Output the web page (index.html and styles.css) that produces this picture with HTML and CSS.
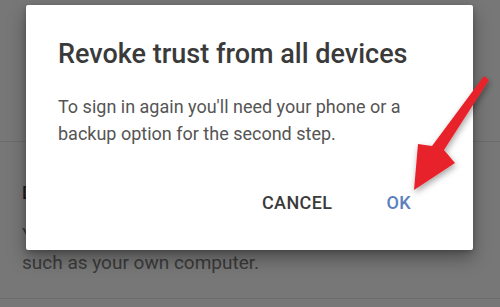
FILE: index.html
```html
<!DOCTYPE html>
<html>
<head>
<meta charset="utf-8">
<link rel="stylesheet" href="styles.css">
</head>
<body>
<div class="page">
  <div class="rule rule-top"></div>
  <div class="section">
    <h2 class="sec-title">Devices you trust</h2>
    <p class="sec-text">You'll skip the second step on trusted devices,<br>such as your own computer.</p>
  </div>
  <div class="rule"></div>
</div>

<div class="dialog">
  <h1 class="dlg-title">Revoke trust from all devices</h1>
  <p class="dlg-body">To sign in again you'll need your phone or a backup option for the second step.</p>
  <div class="dlg-actions">
    <button class="btn btn-cancel">CANCEL</button>
    <button class="btn btn-ok">OK</button>
  </div>
</div>

<svg class="arrow" width="500" height="307" viewBox="0 0 500 307">
  <defs>
    <filter id="sh" x="-50%" y="-50%" width="200%" height="200%">
      <feDropShadow dx="1" dy="3" stdDeviation="3" flood-color="#000" flood-opacity="0.35"/>
    </filter>
  </defs>
  <polygon filter="url(#sh)" fill="#e8232c" points="484,76 489,80 444,150 455,163 414,190 418,144 432,146"/>
</svg>
</body>
</html>
```
FILE: styles.css
```css
html, body {
  margin: 0;
  padding: 0;
}
body {
  width: 500px;
  height: 307px;
  overflow: hidden;
  background: #777777;
  font-family: Roboto, "Noto Sans", sans-serif;
  position: relative;
}
.page {
  padding-top: 141px;
}
.rule {
  height: 1px;
  background: #6c6c6c;
}
.section {
  padding: 40px 22px 21px 22px;
}
.sec-title {
  margin: 0;
  font-size: 18px;
  font-weight: 500;
  color: #1e1e1e;
  line-height: 22px;
}
.sec-text {
  margin: 17px 0 0 0;
  font-size: 19px;
  line-height: 28px;
  color: #3a3a3a;
  white-space: nowrap;
}
.dialog {
  position: absolute;
  left: 26px;
  top: 5px;
  width: 447px;
  height: 245px;
  box-sizing: border-box;
  background: #ffffff;
  border-radius: 2px;
  box-shadow: 0 8px 18px rgba(0,0,0,0.35), 0 2px 5px rgba(0,0,0,0.2);
  padding: 33px 32px 0 32px;
  display: flex;
  flex-direction: column;
}
.dlg-title {
  margin: 0;
  font-size: 27px;
  font-weight: 500;
  line-height: 32px;
  color: #3a3a3a;
}
.dlg-body {
  margin: 23px 0 0 0;
  font-size: 18px;
  line-height: 27px;
  color: #555555;
}
.dlg-actions {
  display: flex;
  justify-content: flex-end;
  gap: 22px;
  margin-top: 38px;
  padding-right: 14px;
}
.btn {
  border: 0;
  background: none;
  font-family: Roboto, "Noto Sans", sans-serif;
  font-size: 18px;
  font-weight: 500;
  letter-spacing: 0.4px;
  padding: 8px 16px;
  line-height: 20px;
}
.btn-cancel {
  color: #3a3a3a;
}
.btn-ok {
  color: #5b80c0;
}
.arrow {
  position: absolute;
  left: 0;
  top: 0;
  pointer-events: none;
}
```
